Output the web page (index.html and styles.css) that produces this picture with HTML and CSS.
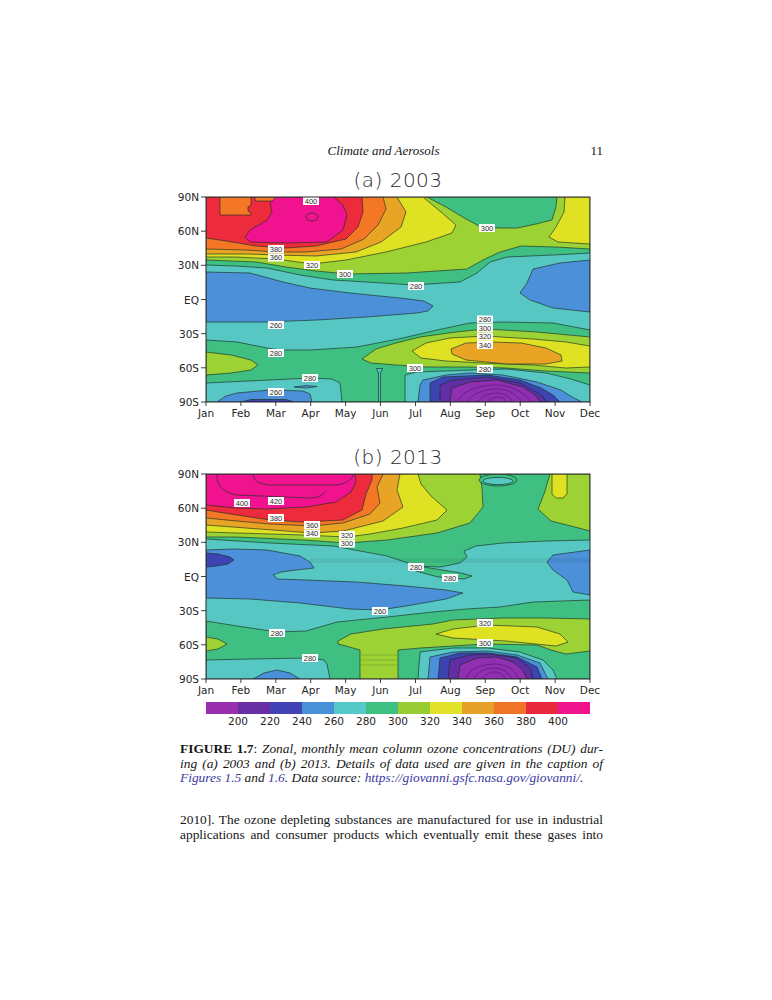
FILE: index.html
```html
<!DOCTYPE html>
<html lang="en">
<head>
<meta charset="utf-8">
<title>Climate and Aerosols – Figure 1.7</title>
<link rel="stylesheet" href="styles.css">
</head>
<body>
<div class="page">
  <header class="running-head">
    <span></span>
    <span class="rh-title">Climate and Aerosols</span>
    <span class="rh-num">11</span>
  </header>

  <figure class="figure">
    <div class="panel">
      <div class="panel-title">(a) 2003</div>
      <svg class="plot" viewBox="-36 -6 430 230" width="430" height="230">
        <defs><clipPath id="ca"><rect x="0" y="0" width="384" height="205"/></clipPath></defs>
        <g clip-path="url(#ca)">
          <rect class="cyn" x="0" y="0" width="384" height="205"/>
          <!-- north -->
          <polygon class="grn" points="0,0 384,0 384,56 347,58 301,60 284,65 271,76 254,85 207,88 177,86 127,83 94,78 61,71 30,69 0,68"/>
          <polygon class="yg" points="0,0 384,0 384,52 350,50 315,49 294,55 277,63 261,72 200,76 141,77 110,74 80,70 50,65 0,63"/>
          <polygon class="grn" points="221,0 351,0 350,10 346,23 330,27 311,31 295,31 275,30 260,22 240,10"/>
          <polygon class="yel" points="0,0 217,0 235,15 250,28 246,36 220,45 180,55 140,63 106,67 70,62 30,60 0,60"/>
          <polygon class="yel" points="359,0 384,0 384,47 352,45 343,40 350,30 358,15"/>
          <polygon class="oy" points="0,0 191,0 200,15 195,30 175,45 150,55 110,59 70,58 40,57 0,57"/>
          <polygon class="org" points="0,0 177,0 180,12 172,28 158,42 135,52 100,55 70,55 40,53 0,52"/>
          <polygon class="red" points="0,0 156,0 157,15 152,30 140,42 110,49 80,51 50,49 20,44 0,41"/>
          <polygon class="org" points="14,0 45,0 45,8 42,10 42,14 45,16 45,18 14,18"/>
          <polygon class="org" points="49,0 88,0 88,4 49,4"/>
          <polygon class="mag" points="64,6 70,0 128,0 137,8 141,18 137,33 121,45 81,46 44,45 39,40 44,33 61,23 66,15"/>
          <ellipse class="line" cx="106" cy="20" rx="6" ry="4"/>
          <!-- middle -->
          <polygon class="blu" points="0,75 44,76 77,85 104,91 144,96 194,101 218,104 227,109 222,114 211,116 161,120 111,123 61,125 0,125"/>
          <polygon class="blu" points="384,63 354,66 327,72 321,86 314,96 324,103 347,111 384,115"/>
          <!-- south -->
          <polygon class="grn" points="0,143 31,145 61,151 74,153 104,153 151,150 197,141 231,133 264,126 297,125 347,126 384,133 384,205 0,205"/>
          <polygon class="yg" points="0,155 25,158 45,163 52,168 45,173 25,176 0,178"/>
          <polygon class="yg" points="156,162 170,152 190,146 214,140 250,135 279,132 331,135 384,140 384,176 340,174 300,171 260,170 220,170 190,168 165,166"/>
          <polygon class="yel" points="206,154 220,146 244,141 279,139 327,142 360,145 384,149 384,170 360,171 327,168 277,166 240,164 215,161"/>
          <polygon class="oy" points="245,152 260,146 285,145 315,146 340,151 355,158 356,164 340,167 300,167 260,163 246,157"/>
          <polygon class="cyn" points="0,186 64,183 104,181 126,182 134,186 136,205 0,205"/>
          <polygon class="blu" points="11,205 20,199 31,196 64,193 97,194 104,197 106,205"/>
          <polygon class="blu" points="88,190 100,188.5 111,189.5 100,191"/>
          <polygon class="ind" points="35,205 45,202.5 80,202.5 88,205"/>
          <polygon class="cyn" points="172.5,205 172.5,176 170.5,171.5 176.5,171.5 174.5,176 174.5,205"/>
          <polygon class="cyn" points="199,205 199,178 210,175 240,174 264,173 300,172 340,176 365,182 384,188 384,205"/>
          <polygon class="blu" points="212,205 214,188 217,183 240,178 264,176 297,178 331,185 355,193 366,200 376,205"/>
          <polygon class="ind" points="224,205 224,186 237,180 281,178 314,183 335,191 347,198 354,205"/>
          <polygon class="dpu" points="234,205 234,188 247,183 281,180 314,186 330,195 337,200 341,205"/>
          <polygon class="pur" points="244,205 246,191 264,185 291,183 317,190 326,196 331,200 334,205"/>
          <path class="inner" d="M252,205 C255,193 275,188 290,188 C305,188 318,195 325,205"/>
          <path class="inner" d="M262,205 C265,196 280,192 291,192 C303,192 311,198 316,205"/>
          <path class="inner" d="M272,205 C275,199 284,196 291,196 C299,196 304,200 307,205"/>
          <path class="inner" d="M281,205 C283,202 288,200 292,200 C296,200 299,202 300,205"/>
          <!-- contour labels -->
          <g class="lbl" transform="translate(105,4)"><rect x="-8" y="-4" width="16" height="8"/><text y="2.7">400</text></g>
          <g class="lbl" transform="translate(281,31)"><rect x="-8" y="-4" width="16" height="8"/><text y="2.7">300</text></g>
          <g class="lbl" transform="translate(70,52)"><rect x="-8" y="-4" width="16" height="8"/><text y="2.7">380</text></g>
          <g class="lbl" transform="translate(70,60.5)"><rect x="-8" y="-4" width="16" height="8"/><text y="2.7">360</text></g>
          <g class="lbl" transform="translate(106,68)"><rect x="-8" y="-4" width="16" height="8"/><text y="2.7">320</text></g>
          <g class="lbl" transform="translate(139,77)"><rect x="-8" y="-4" width="16" height="8"/><text y="2.7">300</text></g>
          <g class="lbl" transform="translate(210,89)"><rect x="-8" y="-4" width="16" height="8"/><text y="2.7">280</text></g>
          <g class="lbl" transform="translate(70,128)"><rect x="-8" y="-4" width="16" height="8"/><text y="2.7">260</text></g>
          <g class="lbl" transform="translate(70,156)"><rect x="-8" y="-4" width="16" height="8"/><text y="2.7">280</text></g>
          <g class="lbl" transform="translate(279,122.5)"><rect x="-8" y="-4" width="16" height="8"/><text y="2.7">280</text></g>
          <g class="lbl" transform="translate(279,131)"><rect x="-8" y="-4" width="16" height="8"/><text y="2.7">300</text></g>
          <g class="lbl" transform="translate(279,139.5)"><rect x="-8" y="-4" width="16" height="8"/><text y="2.7">320</text></g>
          <g class="lbl" transform="translate(279,148)"><rect x="-8" y="-4" width="16" height="8"/><text y="2.7">340</text></g>
          <g class="lbl" transform="translate(209,171)"><rect x="-8" y="-4" width="16" height="8"/><text y="2.7">300</text></g>
          <g class="lbl" transform="translate(279,172)"><rect x="-8" y="-4" width="16" height="8"/><text y="2.7">280</text></g>
          <g class="lbl" transform="translate(104,181)"><rect x="-8" y="-4" width="16" height="8"/><text y="2.7">280</text></g>
          <g class="lbl" transform="translate(70,195)"><rect x="-8" y="-4" width="16" height="8"/><text y="2.7">260</text></g>
        </g>
        <rect class="frame" x="0" y="0" width="384" height="205"/>
        <g class="ticks">
          <path d="M-5,0H0M-5,34.2H0M-5,68.3H0M-5,102.5H0M-5,136.7H0M-5,170.8H0M-5,205H0"/>
          <path d="M0,205V209M34.9,205V209M69.8,205V209M104.7,205V209M139.6,205V209M174.5,205V209M209.5,205V209M244.4,205V209M279.3,205V209M314.2,205V209M349.1,205V209M384,205V209"/>
        </g>
        <g class="ylab">
          <text x="-7" y="4">90N</text><text x="-7" y="38.2">60N</text><text x="-7" y="72.3">30N</text>
          <text x="-7" y="106.5">EQ</text><text x="-7" y="140.7">30S</text><text x="-7" y="174.8">60S</text><text x="-7" y="209">90S</text>
        </g>
        <g class="xlab">
          <text x="0" y="219.5">Jan</text><text x="34.9" y="219.5">Feb</text><text x="69.8" y="219.5">Mar</text>
          <text x="104.7" y="219.5">Apr</text><text x="139.6" y="219.5">May</text><text x="174.5" y="219.5">Jun</text>
          <text x="209.5" y="219.5">Jul</text><text x="244.4" y="219.5">Aug</text><text x="279.3" y="219.5">Sep</text>
          <text x="314.2" y="219.5">Oct</text><text x="349.1" y="219.5">Nov</text><text x="384" y="219.5">Dec</text>
        </g>
      </svg>
    </div>

    <div class="panel">
      <div class="panel-title">(b) 2013</div>
      <svg class="plot" viewBox="-36 -6 430 230" width="430" height="230">
        <defs><clipPath id="cb"><rect x="0" y="0" width="384" height="205"/></clipPath></defs>
        <g clip-path="url(#cb)">
          <rect class="cyn" x="0" y="0" width="384" height="205"/>
          <!-- north -->
          <polygon class="grn" points="0,0 384,0 384,66 340,67 297,69 270,72 258,77 261,83 254,89 234,93 211,92 205,90 181,82 127,72 64,69 0,65"/>
          <polygon class="yg" points="0,0 274,0 276,15 277,33 264,49 231,59 181,66 141,69 97,66 31,63 0,63"/>
          <polygon class="yg" points="344,0 384,0 384,57 365,52 345,47 332,35 338,20"/>
          <polygon class="yel" points="346,0 361,0 361,20 357,24 350,24 346,20"/>
          <ellipse class="grn" cx="292" cy="6" rx="19" ry="6"/>
          <ellipse class="cyn" cx="292" cy="7" rx="15" ry="3.6"/>
          <polygon class="yel" points="0,0 212,0 215,10 225,22 241,36 231,46 197,54 164,60 141,63 97,61 31,59 0,58"/>
          <polygon class="oy" points="0,0 194,0 191,16 197,33 177,47 137,57 106,59 40,54 0,51"/>
          <polygon class="org" points="0,0 177,0 171,13 174,29 164,40 137,49 106,52 64,50 31,47 0,44"/>
          <polygon class="red" points="0,0 166,0 166,6 160,20 156,36 137,46 97,48 64,46 31,41 0,36"/>
          <polygon class="mag" points="0,0 149,0 150,8 145,18 130,28 100,33 60,35 30,34 0,31"/>
          <path class="line" d="M11,0 C11,10 14,17 30,21 L105,24 C112,24 118,20 120,17"/>
          <path class="line" d="M47,0 C48,7 52,10 64,11 L131,11 C140,10 146,5 148,0"/>
          <polygon class="grn" points="205,91 230,95 255,99 266,102 258,105 232,103 210,97"/>
          <!-- middle -->
          <polygon class="blu" points="0,76 27,75 61,76 94,82 104,88 108,94 90,96 75,98 67,101 72,105 100,106 150,108 200,112 240,116 257,119 240,125 200,132 174,136 144,135 94,129 44,125 0,124"/>
          <polygon class="ind" points="0,79 12,80 24,83 28,86 22,90 10,92 0,93"/>
          <polygon class="blu" points="384,76 347,81 341,88 347,96 361,106 367,118 384,121"/>
          <rect class="stripe" x="104" y="84" width="280" height="5"/>
          <!-- south -->
          <polygon class="grn" points="0,147 31,152 71,158 100,157 131,148 181,143 227,138 260,135 294,133 327,128 384,126 384,205 0,205"/>
          <polygon class="yg" points="0,163 12,165 21,170 12,175 0,177"/>
          <polygon class="yg" points="132,167 145,160 177,155 227,150 247,146 297,144 340,144 384,145 384,177 360,180 345,176 331,171 279,170 214,174 192,176 192,205 154,205 154,176 140,172 132,170"/>
          <path class="stripe-line" d="M155,181H191M155,186H191M155,191H191"/>
          <polygon class="yel" points="230,160 247,155 281,151 331,153 354,160 362,168 350,172 300,167 247,164"/>
          <polygon class="cyn" points="0,186 44,185 104,184 118,186 121,190 124,205 0,205"/>
          <polygon class="blu" points="47,205 58,199 71,196 84,199 94,205"/>
          <polygon class="cyn" points="212,205 214,178 247,174 281,174 314,178 337,186 347,196 351,205"/>
          <polygon class="blu" points="222,205 224,183 247,178 281,177 311,181 334,189 342,205"/>
          <polygon class="ind" points="232,205 234,184 254,179 281,179 311,183 331,193 336,205"/>
          <polygon class="dpu" points="242,205 244,186 264,181 284,180 311,184 324,194 327,205"/>
          <polygon class="pur" points="252,205 254,191 271,184 291,183 307,188 317,196 321,205"/>
          <path class="inner" d="M260,205 C262,195 276,190 289,190 C300,190 309,196 313,205"/>
          <path class="inner" d="M268,205 C270,198 280,194 289,194 C297,194 303,199 306,205"/>
          <path class="inner" d="M276,205 C278,201 284,198 289,198 C294,198 298,201 299,205"/>
          <!-- contour labels -->
          <g class="lbl" transform="translate(36,29)"><rect x="-8" y="-4" width="16" height="8"/><text y="2.7">400</text></g>
          <g class="lbl" transform="translate(70,27)"><rect x="-8" y="-4" width="16" height="8"/><text y="2.7">420</text></g>
          <g class="lbl" transform="translate(70,44)"><rect x="-8" y="-4" width="16" height="8"/><text y="2.7">380</text></g>
          <g class="lbl" transform="translate(106,51)"><rect x="-8" y="-4" width="16" height="8"/><text y="2.7">360</text></g>
          <g class="lbl" transform="translate(106,59.5)"><rect x="-8" y="-4" width="16" height="8"/><text y="2.7">340</text></g>
          <g class="lbl" transform="translate(141,61)"><rect x="-8" y="-4" width="16" height="8"/><text y="2.7">320</text></g>
          <g class="lbl" transform="translate(141,69.5)"><rect x="-8" y="-4" width="16" height="8"/><text y="2.7">300</text></g>
          <g class="lbl" transform="translate(210,93)"><rect x="-8" y="-4" width="16" height="8"/><text y="2.7">280</text></g>
          <g class="lbl" transform="translate(244,104)"><rect x="-8" y="-4" width="16" height="8"/><text y="2.7">280</text></g>
          <g class="lbl" transform="translate(174,137)"><rect x="-8" y="-4" width="16" height="8"/><text y="2.7">260</text></g>
          <g class="lbl" transform="translate(71,159)"><rect x="-8" y="-4" width="16" height="8"/><text y="2.7">280</text></g>
          <g class="lbl" transform="translate(279,149)"><rect x="-8" y="-4" width="16" height="8"/><text y="2.7">320</text></g>
          <g class="lbl" transform="translate(279,169)"><rect x="-8" y="-4" width="16" height="8"/><text y="2.7">300</text></g>
          <g class="lbl" transform="translate(104,184)"><rect x="-8" y="-4" width="16" height="8"/><text y="2.7">280</text></g>
        </g>
        <rect class="frame" x="0" y="0" width="384" height="205"/>
        <g class="ticks">
          <path d="M-5,0H0M-5,34.2H0M-5,68.3H0M-5,102.5H0M-5,136.7H0M-5,170.8H0M-5,205H0"/>
          <path d="M0,205V209M34.9,205V209M69.8,205V209M104.7,205V209M139.6,205V209M174.5,205V209M209.5,205V209M244.4,205V209M279.3,205V209M314.2,205V209M349.1,205V209M384,205V209"/>
        </g>
        <g class="ylab">
          <text x="-7" y="4">90N</text><text x="-7" y="38.2">60N</text><text x="-7" y="72.3">30N</text>
          <text x="-7" y="106.5">EQ</text><text x="-7" y="140.7">30S</text><text x="-7" y="174.8">60S</text><text x="-7" y="209">90S</text>
        </g>
        <g class="xlab">
          <text x="0" y="219.5">Jan</text><text x="34.9" y="219.5">Feb</text><text x="69.8" y="219.5">Mar</text>
          <text x="104.7" y="219.5">Apr</text><text x="139.6" y="219.5">May</text><text x="174.5" y="219.5">Jun</text>
          <text x="209.5" y="219.5">Jul</text><text x="244.4" y="219.5">Aug</text><text x="279.3" y="219.5">Sep</text>
          <text x="314.2" y="219.5">Oct</text><text x="349.1" y="219.5">Nov</text><text x="384" y="219.5">Dec</text>
        </g>
      </svg>
    </div>

    <div class="colorbar">
      <span class="cb c1"></span><span class="cb c2"></span><span class="cb c3"></span><span class="cb c4"></span>
      <span class="cb c5"></span><span class="cb c6"></span><span class="cb c7"></span><span class="cb c8"></span>
      <span class="cb c9"></span><span class="cb c10"></span><span class="cb c11"></span><span class="cb c12"></span>
    </div>
    <div class="cb-labels">
      <span>200</span><span>220</span><span>240</span><span>260</span><span>280</span><span>300</span>
      <span>320</span><span>340</span><span>360</span><span>380</span><span>400</span>
    </div>
  </figure>

  <p class="caption">
    <span class="jline"><b class="fig-no">FIGURE 1.7</b>: <i>Zonal, monthly mean column ozone concentrations (DU) dur-</i></span>
    <span class="jline"><i>ing (a) 2003 and (b) 2013. Details of data used are given in the caption of</i></span>
    <span class="lline"><i><a href="#">Figures 1.5</a> and <a href="#">1.6</a>. Data source: <a href="#">https://giovanni.gsfc.nasa.gov/giovanni/</a>.</i></span>
  </p>

  <p class="body-text">
    <span class="jline">2010]. The ozone depleting substances are manufactured for use in industrial</span>
    <span class="jline">applications and consumer products which eventually emit these gases into</span>
  </p>
</div>
</body>
</html>
```

FILE: styles.css
```css
html, body {
  margin: 0;
  padding: 0;
  background: #ffffff;
}

.page {
  width: 423px;
  padding: 143px 0 0 180px;
  color: #151515;
  font-family: "Liberation Serif", "Times New Roman", serif;
}

/* running head */
.running-head {
  display: grid;
  grid-template-columns: 1fr auto 1fr;
  height: 16px;
  font-size: 13px;
  line-height: 16px;
}
.rh-title {
  font-style: italic;
  margin-right: 16px;
}
.rh-num {
  justify-self: end;
}

/* figure */
.figure {
  margin: 10px 0 0 0;
}
.panel + .panel {
  margin-top: 25px;
}
.panel-title {
  margin-left: 26px;
  width: 384px;
  text-align: center;
  font-family: "DejaVu Sans", sans-serif;
  font-weight: 200;
  font-size: 20px;
  line-height: 22px;
  color: #2a2a2a;
  letter-spacing: 0.5px;
}
.plot {
  display: block;
  margin-left: -10px;
  width: 430px;
  height: 230px;
}

/* contour fills */
.plot polygon,
.plot ellipse {
  stroke: #183024;
  stroke-width: 0.65;
  stroke-linejoin: round;
}
.plot .mag { fill: #f0128e; }
.plot .red { fill: #ee2b3d; }
.plot .org { fill: #f47725; }
.plot .oy  { fill: #e8a425; }
.plot .yel { fill: #dfe222; }
.plot .yg  { fill: #9dd235; }
.plot .grn { fill: #3fbf82; }
.plot .cyn { fill: #57c7c3; }
.plot rect.cyn { stroke: none; }
.plot .blu { fill: #4b90d8; }
.plot .ind { fill: #3d44b2; }
.plot .dpu { fill: #612ea6; }
.plot .pur { fill: #912fb1; }

.plot .line {
  fill: none;
  stroke: #183024;
  stroke-width: 0.65;
}
.plot .inner {
  fill: none;
  stroke: #4c1672;
  stroke-width: 0.6;
}
.plot .stripe {
  fill: #000000;
  opacity: 0.05;
}
.plot .stripe-line {
  fill: none;
  stroke: rgba(0, 0, 0, 0.15);
  stroke-width: 1;
}

.plot .frame {
  fill: none;
  stroke: #2a2a2a;
  stroke-width: 1;
}
.plot .ticks path {
  fill: none;
  stroke: #2a2a2a;
  stroke-width: 0.9;
}

/* contour labels */
.plot .lbl rect {
  fill: #ffffff;
  stroke: none;
}
.plot .lbl text {
  font-family: "Liberation Sans", Arial, sans-serif;
  font-size: 7.5px;
  text-anchor: middle;
  fill: #2a2a2a;
}

/* axis labels */
.plot .ylab text,
.plot .xlab text {
  font-family: "DejaVu Sans", sans-serif;
  font-size: 10.5px;
  fill: #262626;
}
.plot .ylab text {
  text-anchor: end;
}
.plot .xlab text {
  text-anchor: middle;
}

/* colour bar */
.colorbar {
  display: flex;
  margin: 4px 0 0 26px;
  width: 384px;
  height: 12px;
}
.cb {
  flex: 1 1 0;
}
.c1  { background: #9a2fae; }
.c2  { background: #692ea3; }
.c3  { background: #4343b5; }
.c4  { background: #4a90d8; }
.c5  { background: #55c8c8; }
.c6  { background: #3fc083; }
.c7  { background: #99cc33; }
.c8  { background: #e2e22a; }
.c9  { background: #e6a228; }
.c10 { background: #f07428; }
.c11 { background: #e8283c; }
.c12 { background: #f0148c; }

.cb-labels {
  display: flex;
  margin-left: 42px;
  height: 14px;
  font-family: "DejaVu Sans", sans-serif;
  font-size: 10.5px;
  line-height: 14px;
  color: #262626;
}
.cb-labels span {
  width: 32px;
  text-align: center;
}

/* caption and body */
.caption {
  margin: 14px 0 0 0;
  font-size: 13.4px;
  line-height: 14.7px;
}
.body-text {
  margin: 27px 0 0 0;
  font-size: 13.4px;
  line-height: 14.7px;
}
.jline {
  display: block;
  text-align: justify;
  text-align-last: justify;
  white-space: nowrap;
}
.lline {
  display: block;
  white-space: nowrap;
}
.fig-no {
  font-weight: bold;
}
.caption a {
  color: #3a3aa0;
  text-decoration: none;
}
```
